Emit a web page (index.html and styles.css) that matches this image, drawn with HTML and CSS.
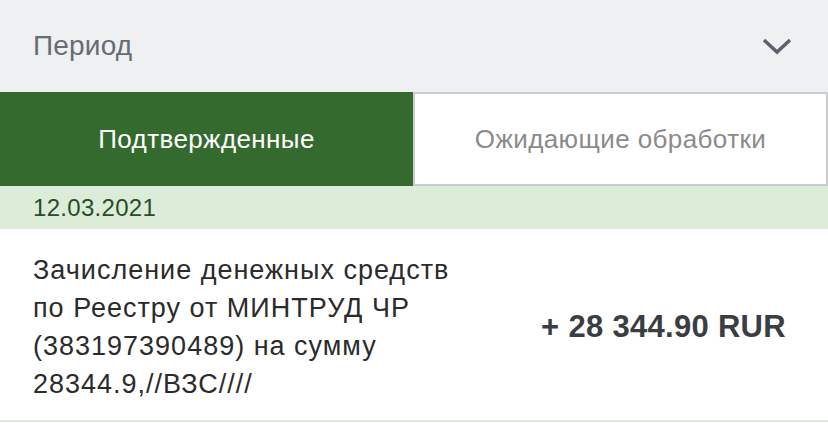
FILE: index.html
```html
<!DOCTYPE html>
<html lang="ru">
<head>
    <meta charset="utf-8">
    <title>Операции</title>
    <link rel="stylesheet" href="styles.css">
</head>
<body>
    <header class="period">
        <span class="period-label">Период</span>
        <svg class="chevron" width="30" height="18" viewBox="0 0 30 18">
            <path d="M2 3 L15 15 L28 3" fill="none" stroke="#5c626b" stroke-width="3.5"/>
        </svg>
    </header>

    <nav class="tabs">
        <div class="tab tab-active">Подтвержденные</div>
        <div class="tab">Ожидающие обработки</div>
    </nav>

    <main>
        <div class="date-row">12.03.2021</div>
        <div class="operation">
            <div class="operation-text">Зачисление денежных средств по Реестру от МИНТРУД ЧР (383197390489) на сумму 28344.9,//ВЗС////</div>
            <div class="operation-sum">+ 28 344.90 RUR</div>
        </div>
    </main>
</body>
</html>
```

FILE: styles.css
```css
/* Global styles */
body {
    font-family: "Liberation Sans", Arial, sans-serif;
    margin: 0;
    padding: 0;
    background: #fff;
    color: #2b2b2b;
}

/* Period selector */
.period {
    background-color: #eff0f2;
    height: 92px;
    display: flex;
    align-items: center;
    justify-content: space-between;
    padding: 0 36px 0 33px;
    box-sizing: border-box;
}

.period-label {
    font-size: 28px;
    letter-spacing: 0.2px;
    color: #676c74;
}

.chevron {
    display: block;
}

/* Tabs */
.tabs {
    display: flex;
    height: 94px;
}

.tab {
    flex: 1;
    display: flex;
    align-items: center;
    justify-content: center;
    font-size: 26px;
    letter-spacing: 0.4px;
    color: #8b8b8b;
    background-color: #fff;
    border: 2px solid #cccccc;
}

.tab-active {
    flex: 0 0 413px;
    background-color: #346a2e;
    border: none;
    color: #fff;
}

/* Date group */
.date-row {
    background-color: #dcecd9;
    height: 43px;
    padding-left: 33px;
    display: flex;
    align-items: center;
    font-size: 24px;
    letter-spacing: 0.3px;
    color: #2a4d26;
}

/* Operation row */
.operation {
    display: flex;
    align-items: center;
    justify-content: space-between;
    padding: 4px 42px 0 33px;
    border-bottom: 2px solid #dcecd9;
    height: 193px;
    box-sizing: border-box;
}

.operation-text {
    width: 450px;
    font-size: 27px;
    letter-spacing: 1px;
    line-height: 38px;
    color: #2b2b2b;
}

.operation-sum {
    font-size: 31px;
    letter-spacing: 0.3px;
    font-weight: bold;
    color: #3a3d42;
}
```
